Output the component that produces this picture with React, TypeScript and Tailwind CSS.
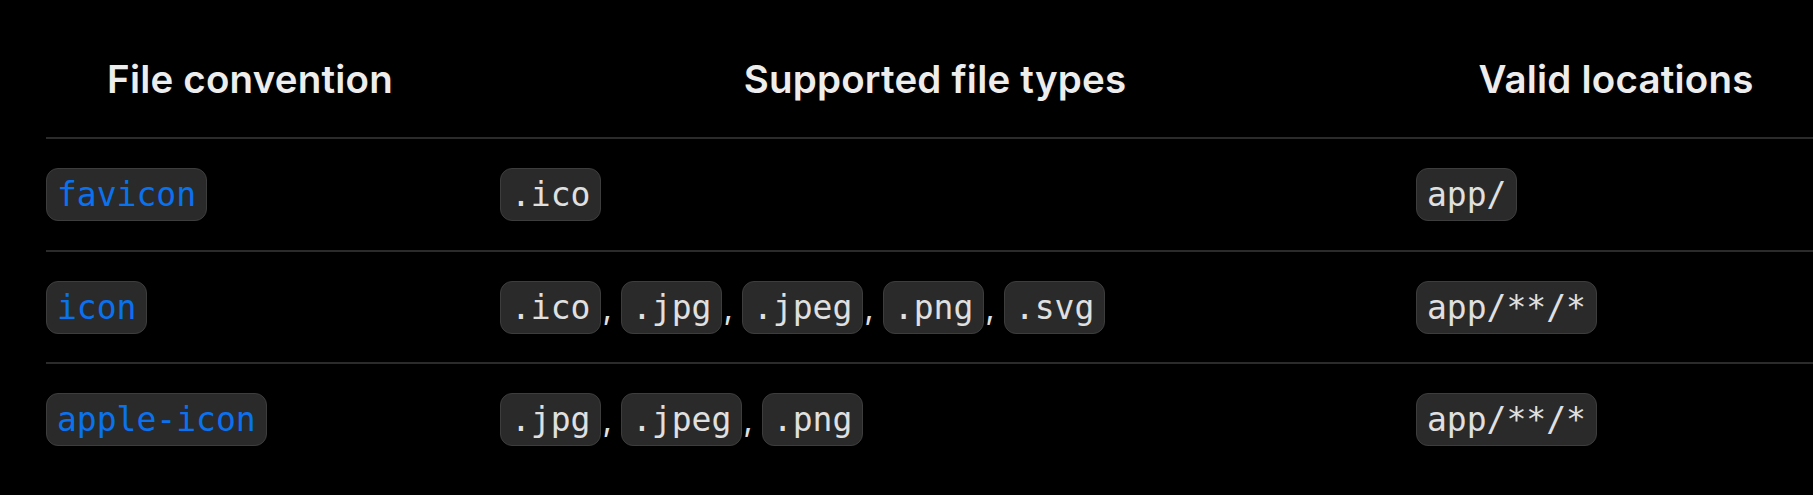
import React from "react";

const sans = { fontFamily: "Inter, 'Noto Sans', sans-serif" };

function Badge({ children, blue = false }: { children: React.ReactNode; blue?: boolean }) {
  return (
    <span
      className={
        "inline-flex h-[53px] items-center rounded-[12px] border border-[#3d3d3d] bg-[#2a2a2a] px-[10px] text-[33px] leading-none font-['DejaVu_Sans_Mono',monospace] " +
        (blue ? "text-[#0a72ef]" : "text-[#e0e0e0]")
      }
    >
      {children}
    </span>
  );
}

function List({ items }: { items: string[] }) {
  return (
    <div className="flex items-baseline">
      {items.map((it, i) => (
        <React.Fragment key={it}>
          <Badge>{it}</Badge>
          {i < items.length - 1 && (
            <span className="ml-[1px] mr-[9px] text-[33px] leading-none text-[#e0e0e0] font-['Inter',sans-serif]">,</span>
          )}
        </React.Fragment>
      ))}
    </div>
  );
}

const rows = [
  { name: "favicon", types: [".ico"], loc: "app/" },
  { name: "icon", types: [".ico", ".jpg", ".jpeg", ".png", ".svg"], loc: "app/**/*" },
  { name: "apple-icon", types: [".jpg", ".jpeg", ".png"], loc: "app/**/*" },
];

export default function App() {
  return (
    <div className="h-[495px] w-[1813px] overflow-hidden bg-black pl-[46px]" style={sans}>
      <div className="w-[1770px]">
        <div className="grid h-[137px] grid-cols-[408px_962px_400px] pt-[60px] text-[38.5px] font-semibold leading-[38px] tracking-[0.2px] text-[#ededed]">
          <div className="text-center">File convention</div>
          <div className="text-center">Supported file types</div>
          <div className="text-center">Valid locations</div>
        </div>
        {rows.map((r, i) => (
          <div
            key={r.name}
            className={
              "grid grid-cols-[408px_962px_400px] items-center border-t-2 border-[#2b2b2b] " +
              (i === 1 ? "h-[112px]" : "h-[113px]")
            }
          >
            <div className="flex">
              <Badge blue>{r.name}</Badge>
            </div>
            <div className="pl-[46px]">
              <List items={r.types} />
            </div>
            <div className="flex">
              <Badge>{r.loc}</Badge>
            </div>
          </div>
        ))}
      </div>
    </div>
  );
}
